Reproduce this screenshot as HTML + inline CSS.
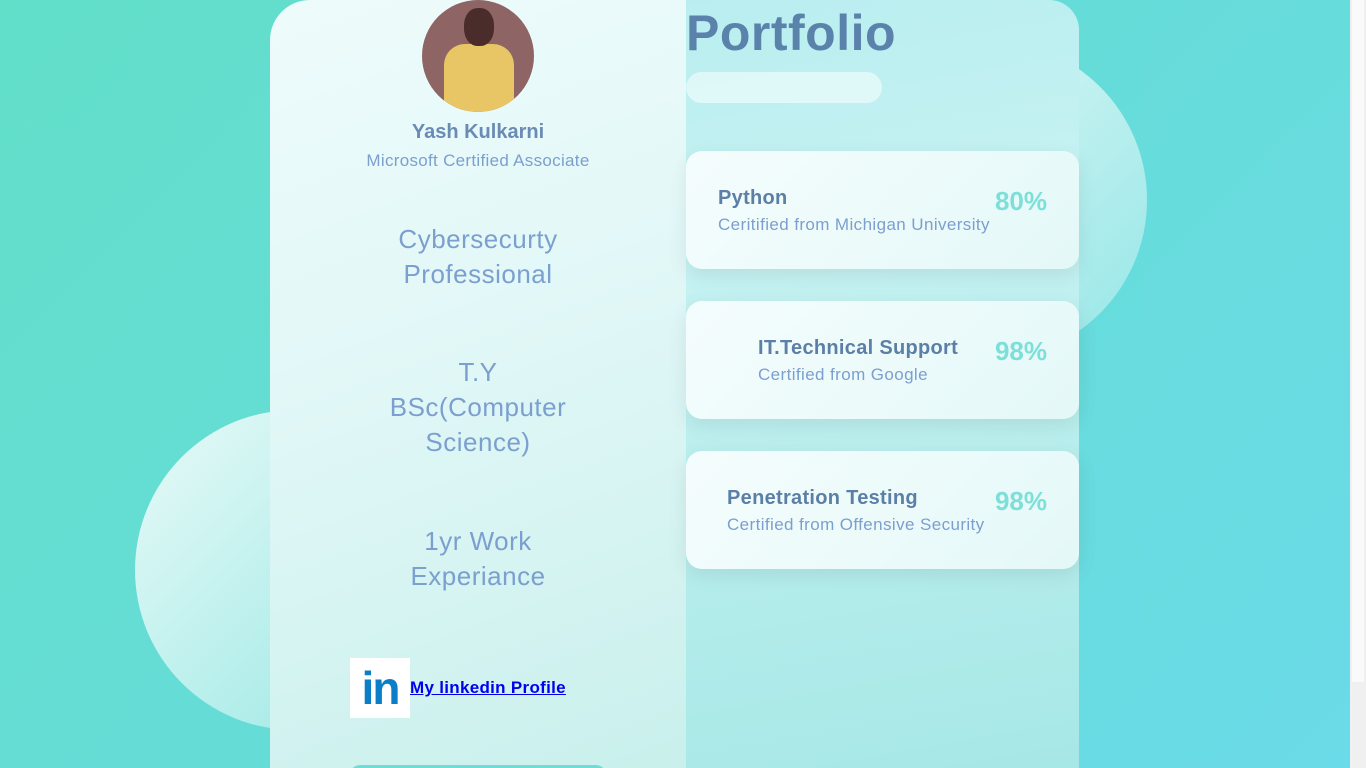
<!DOCTYPE html>
<html><head><meta charset="utf-8"><style>
*{margin:0;padding:0;box-sizing:border-box}
html,body{width:1366px;height:768px;overflow:hidden}
body{font-family:"Liberation Sans",sans-serif;background:linear-gradient(135deg,#62dfc9 0%,#66dcd8 50%,#6adbe8 100%);position:relative}
.circ{position:absolute;border-radius:50%;background:linear-gradient(135deg,rgba(255,255,255,.85),rgba(255,255,255,.3))}
.sb{position:absolute;right:0;top:0;width:16px;height:768px;background:#f0f0f0}
.sb div{position:absolute;left:2px;top:0;width:12px;height:682px;background:#fafafa}
.left{position:absolute;left:270px;top:0;width:416px;height:768px;overflow:hidden;border-radius:40px 0 0 0;background:linear-gradient(160deg,#eefbfb 0%,#e3f8f8 40%,#c9f0ec 100%);text-align:center;color:#7b9fcf}
.right{position:absolute;left:686px;top:0;width:393px;height:768px;border-radius:0 30px 0 0;background:linear-gradient(170deg,#b9eef0 0%,#c6f2f2 30%,#a6e8e6 100%)}
.card{position:absolute;left:686px;width:393px;height:118px;border-radius:16px;background:linear-gradient(135deg,#f5fdfd,#e4f8f8);box-shadow:0 6px 20px rgba(0,0,0,.08)}
.card b{position:absolute;font-size:20px;color:#5b7fa6;letter-spacing:.3px}
.card span{position:absolute;font-size:17px;color:#7b9fcf;letter-spacing:.4px}
.card i{position:absolute;right:32px;top:35px;font-style:normal;font-weight:bold;font-size:26px;color:#7de0d8}
.big{font-size:26px;line-height:35px;position:absolute;left:0;width:416px;letter-spacing:.5px}
</style></head><body>
<div class="circ" style="left:827px;top:40px;width:320px;height:320px"></div>
<div class="circ" style="left:135px;top:410px;width:320px;height:320px"></div>
<div style="position:absolute;left:563px;top:0;width:48px;height:2px;background:#0078d7"></div>
<div style="position:absolute;left:611px;top:0;width:193px;height:1px;background:#222"></div>
<div class="right"></div>
<div class="left">
<div style="position:absolute;left:152px;top:0;width:112px;height:112px;border-radius:50%;overflow:hidden;background:#8e6464">
<div style="position:absolute;left:22px;top:44px;width:70px;height:70px;border-radius:30% 30% 0 0;background:#e8c665"></div>
<div style="position:absolute;left:42px;top:8px;width:30px;height:38px;border-radius:45%;background:#4a2c2a"></div>
</div>
<div style="position:absolute;top:121px;width:416px;font-weight:bold;font-size:20px;color:#6a8bb5">Yash Kulkarni</div>
<div style="position:absolute;top:151px;width:416px;font-size:17px;letter-spacing:.3px">Microsoft Certified Associate</div>
<div class="big" style="top:222px">Cybersecurty<br>Professional</div>
<div class="big" style="top:355px">T.Y<br>BSc(Computer<br>Science)</div>
<div class="big" style="top:524px">1yr Work<br>Experiance</div>
<div style="position:absolute;left:80px;top:658px;width:60px;height:60px;background:#fff;color:#0a7fc7;font-weight:bold;font-size:46px;line-height:60px;text-align:center;letter-spacing:-2px">in</div>
<a style="position:absolute;left:140px;top:678px;color:#0000ee;font-weight:bold;font-size:17px;text-decoration:underline;letter-spacing:.3px">My linkedin Profile</a>
<div style="position:absolute;left:80px;top:765px;width:256px;height:20px;border-radius:10px;background:#6fdcd8"></div>
</div>
<div style="position:absolute;left:686px;top:4px;font-weight:bold;font-size:50px;color:#5b82ab;letter-spacing:.5px">Portfolio</div>
<div style="position:absolute;left:686px;top:72px;width:196px;height:31px;border-radius:16px;background:rgba(255,255,255,.5)"></div>
<div class="card" style="top:151px"><b style="left:32px;top:36px">Python</b><span style="left:32px;top:64px">Ceritified from Michigan University</span><i>80%</i></div>
<div class="card" style="top:301px"><b style="left:72px;top:36px">IT.Technical Support</b><span style="left:72px;top:64px">Certified from Google</span><i>98%</i></div>
<div class="card" style="top:451px"><b style="left:41px;top:36px">Penetration Testing</b><span style="left:41px;top:64px">Certified from Offensive Security</span><i>98%</i></div>
<div class="sb"><div></div></div>
</body></html>
